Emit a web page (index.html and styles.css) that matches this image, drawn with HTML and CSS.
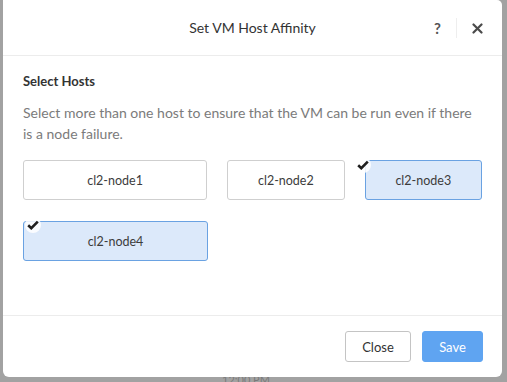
FILE: index.html
```html
<!DOCTYPE html>
<html lang="en">
<head>
    <meta charset="UTF-8">
    <title>Set VM Host Affinity</title>
    <link rel="stylesheet" href="styles.css">
</head>
<body>
    <div class="backdrop-text">12:00 PM</div>
    <div class="modal">
        <div class="modal-header">
            <h1 class="modal-title">Set VM Host Affinity</h1>
            <div class="header-actions">
                <span class="help-icon">?</span>
                <span class="header-divider"></span>
                <svg class="close-icon" width="11" height="11" viewBox="0 0 11 11">
                    <path d="M1.5 1.5 L9.5 9.5 M9.5 1.5 L1.5 9.5" stroke="#4a4a4a" stroke-width="2.2" stroke-linecap="round"/>
                </svg>
            </div>
        </div>

        <div class="modal-body">
            <h2 class="section-title">Select Hosts</h2>
            <p class="section-description">Select more than one host to ensure that the VM can be run even if there is a node failure.</p>

            <div class="host-list">
                <div class="host-row">
                    <div class="host-box host-wide">cl2-node1</div>
                    <div class="host-box host-narrow">cl2-node2</div>
                    <div class="host-box host-narrow selected">
                        <span class="check check-left">
                            <svg width="12" height="10" viewBox="0 0 12 10"><path d="M1.2 5.2 L4.3 8.2 L10.8 1.6" fill="none" stroke="#1f1f1f" stroke-width="2.6" stroke-linejoin="miter"/></svg>
                        </span>
                        cl2-node3
                    </div>
                </div>
                <div class="host-row">
                    <div class="host-box host-wide selected">
                        <span class="check">
                            <svg width="12" height="10" viewBox="0 0 12 10"><path d="M1.2 5.2 L4.3 8.2 L10.8 1.6" fill="none" stroke="#1f1f1f" stroke-width="2.6" stroke-linejoin="miter"/></svg>
                        </span>
                        cl2-node4
                    </div>
                </div>
            </div>
        </div>

        <div class="modal-footer">
            <button class="btn btn-default">Close</button>
            <button class="btn btn-primary">Save</button>
        </div>
    </div>
</body>
</html>
```

FILE: styles.css
```css
body {
    margin: 0;
    padding: 0;
    background-color: #a2a2a2;
    font-family: Lato, 'Open Sans', sans-serif;
    color: #333333;
    height: 382px;
    overflow: hidden;
    position: relative;
}
.backdrop-text {
    position: absolute;
    left: 222px;
    top: 374px;
    font-size: 11px;
    line-height: 12px;
    color: #7a7a7a;
}
.modal {
    position: relative;
    background-color: #ffffff;
    margin: 0 5px 0 3px;
    height: 377px;
    border-radius: 0 5px 6px 6px;
    display: flex;
    flex-direction: column;
}
.modal-header {
    height: 56px;
    flex-shrink: 0;
    border-bottom: 1px solid #ececec;
    display: flex;
    align-items: center;
    justify-content: center;
    position: relative;
    box-sizing: border-box;
}
.modal-title {
    margin: 0;
    font-size: 14px;
    font-weight: 400;
    color: #333333;
}
.header-actions {
    position: absolute;
    right: 19px;
    top: 18px;
    display: flex;
    align-items: center;
    height: 20px;
}
.help-icon {
    font-size: 15px;
    font-weight: 700;
    color: #555555;
    width: 11px;
    text-align: center;
}
.header-divider {
    width: 1px;
    height: 20px;
    background-color: #eeeeee;
    margin: 0 15px 0 13px;
}
.close-icon {
    display: block;
}
.modal-body {
    flex: 1;
    padding: 17px 20px 0 20px;
    border-bottom: 1px solid #ececec;
}
.section-title {
    margin: 0;
    font-size: 13px;
    line-height: 17px;
    font-weight: 700;
    color: #333333;
}
.section-description {
    margin: 12px 0 0 0;
    max-width: 460px;
    font-size: 14px;
    line-height: 21px;
    color: #7b7b7b;
}
.host-list {
    margin-top: 16px;
    display: flex;
    flex-direction: column;
    gap: 21px;
}
.host-row {
    display: flex;
    gap: 20px;
}
.host-box {
    position: relative;
    height: 40px;
    box-sizing: border-box;
    border: 1px solid #cfcfcf;
    border-radius: 3px;
    display: flex;
    align-items: center;
    justify-content: center;
    font-size: 12.5px;
    color: #3c3c3c;
    background-color: #ffffff;
}
.host-wide {
    width: 185px;
}
.host-narrow {
    width: 118px;
}
.host-box.selected {
    background-color: #dce9fa;
    border-color: #6aa2e2;
}
.check {
    position: absolute;
    top: -5px;
    left: 1px;
    width: 16px;
    height: 16px;
    border-radius: 50%;
    background-color: rgba(255, 255, 255, 0.85);
    display: flex;
    align-items: center;
    justify-content: center;
}
.check-left {
    left: -11px;
    top: -4px;
}
.modal-footer {
    height: 61px;
    box-sizing: border-box;
    flex-shrink: 0;
    display: flex;
    justify-content: flex-end;
    align-items: center;
    gap: 11px;
    padding-right: 19px;
}
.btn {
    height: 31px;
    border-radius: 3px;
    font-family: Lato, 'Open Sans', sans-serif;
    font-size: 13px;
    padding: 0;
    cursor: pointer;
}
.btn-default {
    width: 66px;
    background-color: #ffffff;
    border: 1px solid #c4c4c4;
    color: #333333;
}
.btn-primary {
    width: 61px;
    background-color: #5fa4f1;
    border: 1px solid #5fa4f1;
    color: #ffffff;
}
```
